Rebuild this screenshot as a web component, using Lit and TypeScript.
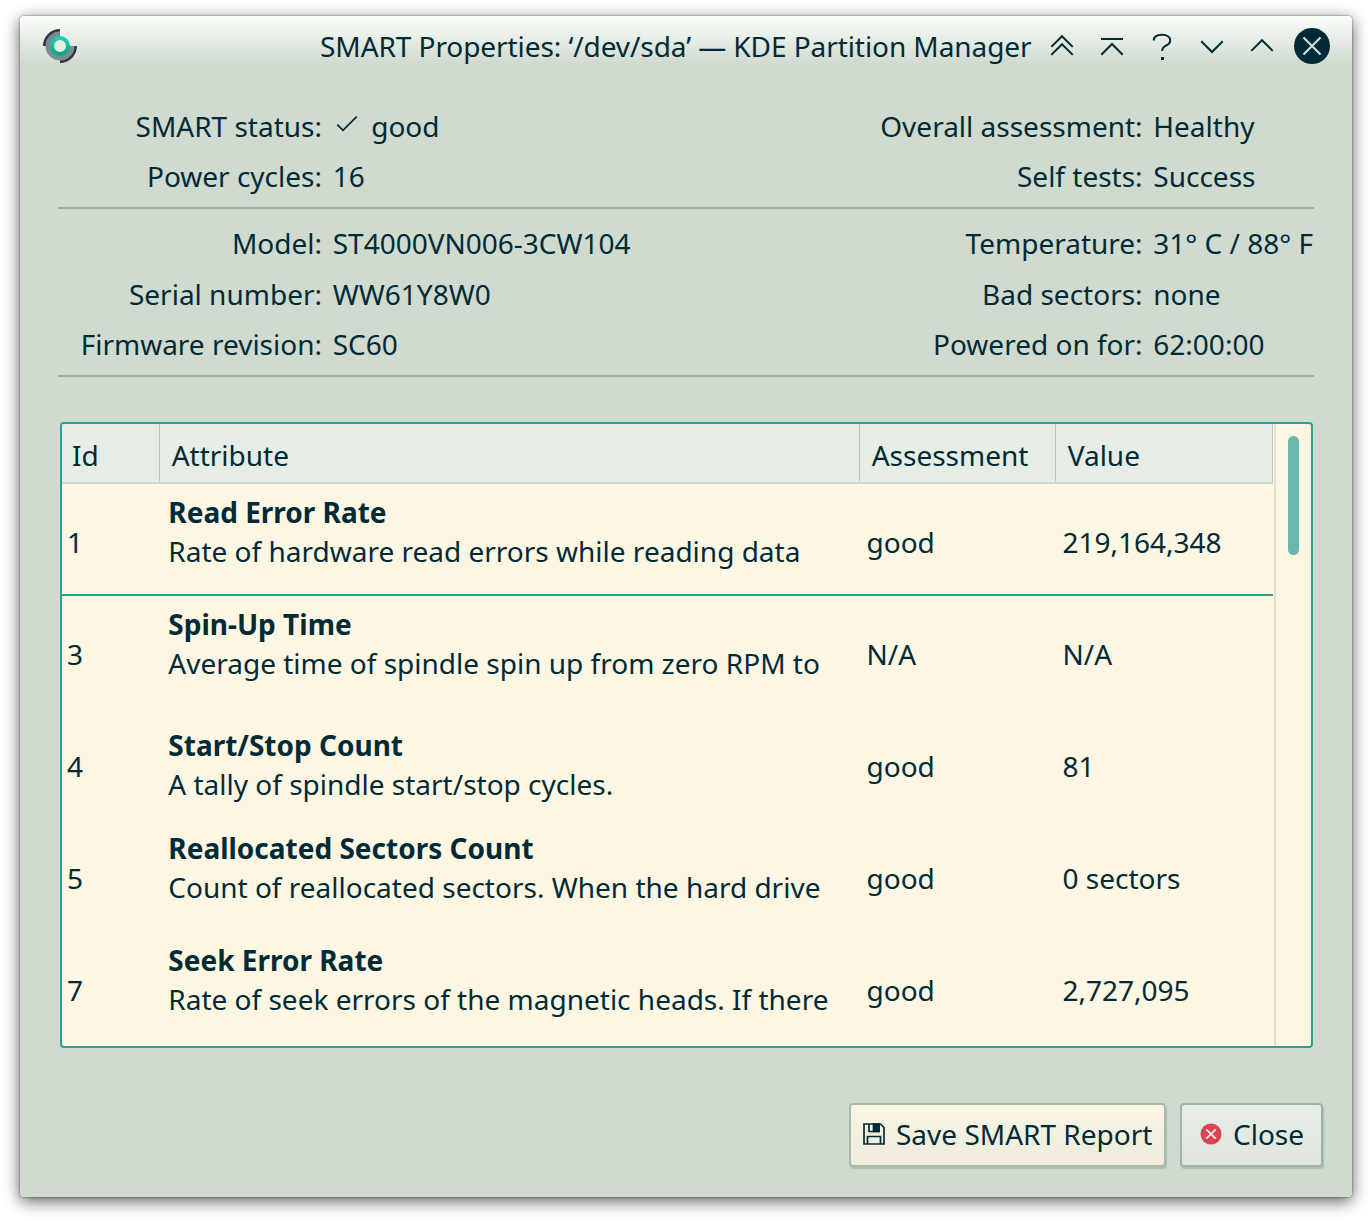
import { LitElement, html, css, svg } from "lit";
import { customElement } from "lit/decorators.js";

interface Attr {
  id: string;
  name: string;
  text: string;
  assessment: string;
  value: string;
  short?: boolean;
}

const ATTRS: Attr[] = [
  { id: "1", name: "Read Error Rate", text: "Rate of hardware read errors while reading data", assessment: "good", value: "219,164,348" },
  { id: "3", name: "Spin-Up Time", text: "Average time of spindle spin up from zero RPM to", assessment: "N/A", value: "N/A" },
  { id: "4", name: "Start/Stop Count", text: "A tally of spindle start/stop cycles.", assessment: "good", value: "81", short: true },
  { id: "5", name: "Reallocated Sectors Count", text: "Count of reallocated sectors. When the hard drive", assessment: "good", value: "0 sectors" },
  { id: "7", name: "Seek Error Rate", text: "Rate of seek errors of the magnetic heads. If there", assessment: "good", value: "2,727,095" },
];

const WINDOW_ICONS = [
  svg`<path d="M7.3 18.9 18 8.2 28.7 18.9M7.3 26.9 18 16.2 28.7 26.9"/>`,
  svg`<path d="M7 11H29M7.3 26.7 18 16 28.7 26.7"/>`,
  svg`<path d="M9.8 12.5C9.8 8.2 13.5 6.8 18 6.8 23 6.8 26.2 9 26.2 12.4 26.2 18.5 18.2 16.4 18.2 23"/><path class="dot" d="M17 29h3v3h-3z"/>`,
  svg`<path d="M7.3 13.3 18 24 28.7 13.3"/>`,
  svg`<path d="M7.3 22.9 18 12.2 28.7 22.9"/>`,
];

@customElement("app-root")
export class AppRoot extends LitElement {
  static styles = css`
    :host {
      display: block;
      box-sizing: border-box;
      height: 1221px;
      padding: 16px 20px 24px;
      overflow: hidden;
      background: #fff;
      color: #002b36;
      font: 28px/38px "Noto Sans", sans-serif;
      white-space: nowrap;
    }
    * { box-sizing: border-box; }
    svg { display: block; flex: none; }
    .window {
      height: 1181px;
      display: flex;
      flex-direction: column;
      border-radius: 4px;
      background: linear-gradient(#fbfffa 0, #d0dacf 48px);
      box-shadow: 0 0 2px rgba(0, 0, 0, 0.6), 0 4px 16px rgba(0, 0, 0, 0.65);
    }
    .titlebar {
      height: 60px;
      display: flex;
      align-items: center;
      padding: 0 22px;
    }
    .title { margin-left: auto; margin-right: 12.5px; padding-bottom: 1px; letter-spacing: -0.075px; }
    .controls { display: flex; gap: 14px; }
    .controls svg { fill: none; stroke: #002b36; stroke-width: 2; }
    .controls .dot { fill: #002b36; stroke: none; }
    .facts {
      display: flex;
      justify-content: space-between;
      margin: 0 38px;
      border-bottom: 2px solid #9eb0aa;
    }
    .status { height: 133px; padding-top: 25px; }
    .device { height: 168px; padding-top: 9px; }
    .grid {
      display: grid;
      grid-auto-rows: 50.4px;
      align-items: center;
      column-gap: 10.7px;
      align-content: start;
    }
    .status .grid { grid-auto-rows: 50px; }
    .left { grid-template-columns: 264px auto; }
    .right { grid-template-columns: auto 160.7px; }
    .label { text-align: right; }
    .good { display: flex; gap: 10.5px; align-items: center; }
    .table {
      height: 626px;
      margin: 45px 39px 0 40px;
      display: flex;
      border: 2px solid #2aa198;
      border-radius: 4px;
      background: #fdf6e3;
      overflow: hidden;
    }
    .rows { width: 1211px; }
    .head, .row { display: grid; grid-template-columns: 98px 700px 196px 217px; }
    .head { height: 60px; background: #e6ede4; border-bottom: 2px solid #d0d8d0; }
    .head div { border-right: 1px solid #b8c5bf; padding: 12px 0 0 10px; }
    .head div + div { padding-left: 11.7px; }
    .row { height: 112px; align-items: center; padding-left: 5px; grid-template-columns: 101.3px 698.2px 196px 1fr; }
    .row:nth-child(2) { border-bottom: 2px solid #2aa198; padding-top: 2px; }
    .desc { align-self: start; padding-top: 9px; line-height: 39px; }
    .row:nth-child(2) .desc { padding-top: 7px; }
    .desc.short { padding-top: 18px; }
    .name { font-weight: 700; }
    .cell { padding-top: 4px; }
    .scroll {
      flex: 1;
      margin-left: 1px;
      border-left: 2px solid #e6e0cf;
      padding: 12px 0 0 12px;
    }
    .thumb { width: 11px; height: 119px; border-radius: 6px; background: #69b9ae; }
    .actions {
      display: flex;
      justify-content: flex-end;
      gap: 14px;
      padding: 55px 29px 0 0;
    }
    .btn {
      display: flex;
      align-items: center;
      height: 64px;
      gap: 11px;
      padding: 0 12px 2px;
      border: 2px solid #abb8b0;
      border-radius: 4px;
      font: inherit;
      color: inherit;
      box-shadow: 1px 2px 1px rgba(100, 120, 110, 0.3);
    }
    .save { width: 317px; background: linear-gradient(#f9f4e3, #eeebdc); }
    .close { width: 143px; padding: 0 18px 2px; gap: 11px; background: linear-gradient(#e6eee6, #dee6de); border-color: #9fb3af; }
  `;

  private fact(label: string, value: unknown) {
    return html`<div class="label">${label}</div><div>${value}</div>`;
  }

  render() {
    return html`
      <div class="window">
        <div class="titlebar">
          <svg width="36" height="36" viewBox="0 0 36 36">
            <defs>
              <linearGradient id="ring" x2="0" y2="1"><stop stop-color="#20d0ac"/><stop offset="1" stop-color="#0ba87a"/></linearGradient>
            </defs>
            <path d="M18 1A17 17 0 0 0 1 18H4A14 14 0 0 1 18 4ZM18 35A17 17 0 0 0 35 18H32A14 14 0 0 1 18 32Z" fill="#31363b"/>
            <path d="M18 3.5A14.5 14.5 0 0 0 3.5 18 14.5 14.5 0 0 0 18 32.5 14.5 14.5 0 0 0 32.5 18H18Z" fill="#7a8c93"/>
            <circle cx="18" cy="18" r="8" fill="#e6ede4" stroke="url(#ring)" stroke-width="4"/>
          </svg>
          <div class="title">SMART Properties: ‘/dev/sda’ — KDE Partition Manager</div>
          <div class="controls">
            ${WINDOW_ICONS.map((i) => html`<svg width="36" height="36" viewBox="0 0 36 36">${i}</svg>`)}
            <svg width="36" height="36" viewBox="0 0 36 36">
              <circle class="dot" cx="18" cy="18" r="18"/>
              <path d="M9.5 9.5 26.5 26.5M26.5 9.5 9.5 26.5" stroke="#d8e1d7"/>
            </svg>
          </div>
        </div>
        <div class="facts status">
          <div class="grid left">
            ${this.fact("SMART status:", html`<div class="good">
              <svg width="28" height="28" viewBox="0 0 28 28" fill="none" stroke="#002b36" stroke-width="1.8"><path d="M4.3 12.6 10 18.3 23.7 4.6"/></svg>good</div>`)}
            ${this.fact("Power cycles:", "16")}
          </div>
          <div class="grid right">
            ${this.fact("Overall assessment:", "Healthy")}
            ${this.fact("Self tests:", "Success")}
          </div>
        </div>
        <div class="facts device">
          <div class="grid left">
            ${this.fact("Model:", "ST4000VN006-3CW104")}
            ${this.fact("Serial number:", "WW61Y8W0")}
            ${this.fact("Firmware revision:", "SC60")}
          </div>
          <div class="grid right">
            ${this.fact("Temperature:", "31° C / 88° F")}
            ${this.fact("Bad sectors:", "none")}
            ${this.fact("Powered on for:", "62:00:00")}
          </div>
        </div>
        <div class="table">
          <div class="rows">
            <div class="head"><div>Id</div><div>Attribute</div><div>Assessment</div><div>Value</div></div>
            ${ATTRS.map((a) => html`<div class="row">
              <div class="cell">${a.id}</div>
              <div class="desc ${a.short ? "short" : ""}"><div class="name">${a.name}</div><div>${a.text}</div></div>
              <div class="cell">${a.assessment}</div>
              <div class="cell">${a.value}</div>
            </div>`)}
          </div>
          <div class="scroll"><div class="thumb"></div></div>
        </div>
        <div class="actions">
          <button class="btn save">
            <svg width="22" height="22" viewBox="0 0 22 22" fill="none" stroke="#002b36" stroke-width="1.7">
              <path d="M1 1H17.5L21 4.5V21H1Z M4.5 21V13.5H17.5V21M6 1V8.5H16V1"/><path d="M10.5 1H16V8.5H10.5Z" fill="#002b36"/>
            </svg>
            Save SMART Report
          </button>
          <button class="btn close">
            <svg width="22" height="22" viewBox="0 0 22 22"><circle cx="11" cy="11" r="10.5" fill="#da4453"/><path d="M6.3 6.3 15.7 15.7M15.7 6.3 6.3 15.7" stroke="#e6ede4" stroke-width="1.8"/></svg>
            Close
          </button>
        </div>
      </div>
    `;
  }
}
